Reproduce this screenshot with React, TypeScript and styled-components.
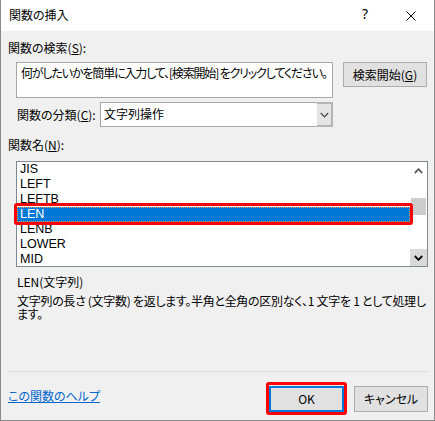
import { FC, ReactNode } from 'react'
import styled, { createGlobalStyle } from 'styled-components'

const GlobalStyle = createGlobalStyle`
  * {
    box-sizing: border-box;
  }
  html,
  body {
    margin: 0;
    padding: 0;
    background: #ffffff;
  }
  body {
    font-family: 'Noto Sans CJK JP', 'Noto Sans', sans-serif;
    font-size: 12px;
    color: #000000;
    font-feature-settings: 'palt';
  }
`

const FUNCTIONS = ['JIS', 'LEFT', 'LEFTB', 'LEN', 'LENB', 'LOWER', 'MID']
const SELECTED = 'LEN'

const Chevron: FC<{ up?: boolean; color: string; width?: number }> = ({ up, color, width = 1.8 }) => (
  <svg width="9" height="6" viewBox="0 0 9 6">
    <polyline
      points={up ? '0.8,5 4.5,1.2 8.2,5' : '0.8,1 4.5,4.8 8.2,1'}
      fill="none"
      stroke={color}
      strokeWidth={width}
    />
  </svg>
)

const Annotated: FC<{ children: ReactNode }> = ({ children }) => <Marked>{children}</Marked>

const App: FC = () => {
  return (
    <>
      <GlobalStyle />
      <Window>
        <TitleBar>
          <TitleText>関数の挿入</TitleText>
          <CaptionButton>
            <HelpGlyph>?</HelpGlyph>
          </CaptionButton>
          <CaptionButton>
            <svg width="10" height="10" viewBox="0 0 10 10">
              <path d="M0.5 0.5 L9.5 9.5 M9.5 0.5 L0.5 9.5" stroke="#000" strokeWidth="1" />
            </svg>
          </CaptionButton>
        </TitleBar>

        <Body>
          <FieldLabel $top={9}>
            関数の検索(<u>S</u>):
          </FieldLabel>
          <SearchRow>
            <SearchBox>何がしたいかを簡単に入力して、[検索開始] をクリックしてください。</SearchBox>
            <PushButton $width={84} $height={25}>
              検索開始(<u>G</u>)
            </PushButton>
          </SearchRow>

          <CategoryRow>
            <CategoryLabel>
              関数の分類(<u>C</u>):
            </CategoryLabel>
            <Select>
              <SelectValue>文字列操作</SelectValue>
              <DropButton>
                <Chevron color="#444" width={1.2} />
              </DropButton>
            </Select>
          </CategoryRow>

          <FieldLabel $top={10}>
            関数名(<u>N</u>):
          </FieldLabel>
          <ListBox>
            <ListItems>
              {FUNCTIONS.map((name) =>
                name === SELECTED ? (
                  <Annotated key={name}>
                    <ListItem $selected>{name}</ListItem>
                  </Annotated>
                ) : (
                  <ListItem key={name}>{name}</ListItem>
                )
              )}
            </ListItems>
            <Scrollbar>
              <ScrollArrow>
                <Chevron up color="#606060" />
              </ScrollArrow>
              <ScrollTrack>
                <ScrollThumb />
              </ScrollTrack>
              <ScrollArrow $hover>
                <Chevron color="#000" />
              </ScrollArrow>
            </Scrollbar>
          </ListBox>

          <Syntax>LEN(文字列)</Syntax>
          <Description>
            文字列の長さ (文字数) を返します。半角と全角の区別なく、1 文字を 1 として処理します。
          </Description>

          <Spacer />
          <Separator />
          <Footer>
            <HelpLink href="#">この関数のヘルプ</HelpLink>
            <ButtonGroup>
              <Annotated>
                <PushButton $width={75} $height={26} $primary>
                  OK
                </PushButton>
              </Annotated>
              <PushButton $width={74} $height={26}>
                キャンセル
              </PushButton>
            </ButtonGroup>
          </Footer>
        </Body>
      </Window>
    </>
  )
}

const Window = styled.div`
  width: 435px;
  height: 421px;
  display: flex;
  flex-direction: column;
  background: #f0f0f0;
  border: 1px solid #8a8a8a;
  border-top: none;
`

const TitleBar = styled.div`
  height: 31px;
  flex: none;
  display: flex;
  align-items: center;
  background: #ffffff;
  padding-left: 8px;
`

const TitleText = styled.span`
  flex: 1;
  line-height: 16px;
  margin-top: -2px;
`

const CaptionButton = styled.div`
  width: 46px;
  height: 31px;
  display: flex;
  align-items: center;
  justify-content: center;
`

const HelpGlyph = styled.span`
  font-family: 'Noto Sans', sans-serif;
  font-size: 14px;
  line-height: 16px;
  margin-top: -3px;
`

const Body = styled.div`
  flex: 1;
  display: flex;
  flex-direction: column;
  padding: 0 6px 0 7px;
`

const FieldLabel = styled.div<{ $top: number }>`
  margin-top: ${(p) => p.$top}px;
  line-height: 16px;
`

const SearchRow = styled.div`
  display: flex;
  align-items: flex-start;
  gap: 10px;
  margin-top: 6px;
  padding-left: 8px;
`

const SearchBox = styled.div`
  width: 317px;
  height: 36px;
  background: #ffffff;
  border: 1px solid #a6a6a6;
  padding: 2px 0 0 4px;
  line-height: 16px;
  letter-spacing: -1.15px;
  white-space: nowrap;
  overflow: hidden;
`

const PushButton = styled.div<{ $width: number; $height: number; $primary?: boolean }>`
  width: ${(p) => p.$width}px;
  height: ${(p) => p.$height}px;
  display: flex;
  align-items: center;
  justify-content: center;
  background: #e1e1e1;
  border: ${(p) => (p.$primary ? '2px solid #0078d7' : '1px solid #adadad')};
  line-height: 16px;
  white-space: nowrap;
`

const CategoryRow = styled.div`
  display: flex;
  align-items: center;
  margin-top: 4px;
  padding-left: 9px;
`

const CategoryLabel = styled.div`
  width: 83px;
  line-height: 16px;
`

const Select = styled.div`
  width: 233px;
  height: 25px;
  display: flex;
  background: #ffffff;
  border: 1px solid #a6a6a6;
`

const SelectValue = styled.div`
  flex: 1;
  padding-left: 3px;
  line-height: 22px;
`

const DropButton = styled.div`
  width: 17px;
  margin: -1px -1px -1px 0;
  display: flex;
  align-items: center;
  justify-content: center;
  background: #e5e5e5;
  border: 2px solid #b4b4b4;
  border-left: 1px solid #ffffff;
`

const ListBox = styled.div`
  width: 412px;
  height: 106px;
  margin: 8px 0 0 8px;
  display: flex;
  background: #ffffff;
  border: 1px solid #828790;
`

const ListItems = styled.div`
  flex: 1;
  display: flex;
  flex-direction: column;
`

const ListItem = styled.div<{ $selected?: boolean }>`
  height: 15px;
  line-height: 15px;
  padding-left: 3px;
  font-family: 'Liberation Sans', 'Noto Sans CJK JP', sans-serif;
  font-size: 12.5px;
  background: ${(p) => (p.$selected ? '#0078d7' : 'transparent')};
  color: ${(p) => (p.$selected ? '#ffffff' : '#000000')};
  outline: ${(p) => (p.$selected ? '1px dotted #e0a050' : 'none')};
  outline-offset: -1px;
`

const Marked = styled.div`
  position: relative;
  &::after {
    content: '';
    position: absolute;
    inset: -4px -3px -3px -3px;
    border: 3px solid #ff0000;
    border-radius: 3px;
    pointer-events: none;
  }
`

const Scrollbar = styled.div`
  width: 17px;
  display: flex;
  flex-direction: column;
  background: #ffffff;
`

const ScrollArrow = styled.div<{ $hover?: boolean }>`
  height: 17px;
  display: flex;
  align-items: center;
  justify-content: center;
  background: ${(p) => (p.$hover ? '#dadada' : 'transparent')};
`

const ScrollTrack = styled.div`
  flex: 1;
  padding: 19px 1px 0 1px;
`

const ScrollThumb = styled.div`
  height: 17px;
  background: #cdcdcd;
`

const Syntax = styled.div`
  margin-top: 7px;
  padding-left: 9px;
  line-height: 16px;
`

const Description = styled.div`
  margin-top: 4px;
  padding-left: 9px;
  width: 421px;
  line-height: 13px;
  letter-spacing: -0.3px;
`

const Spacer = styled.div`
  flex: 1;
`

const Separator = styled.div`
  height: 1px;
  background: #dcdcdc;
`

const Footer = styled.div`
  display: flex;
  justify-content: space-between;
  align-items: flex-start;
  margin: 14px 0 8px 0;
`

const HelpLink = styled.a`
  margin-top: 2px;
  line-height: 16px;
  color: #0066cc;
  text-decoration: underline;
`

const ButtonGroup = styled.div`
  display: flex;
  gap: 10px;
`

export default App
